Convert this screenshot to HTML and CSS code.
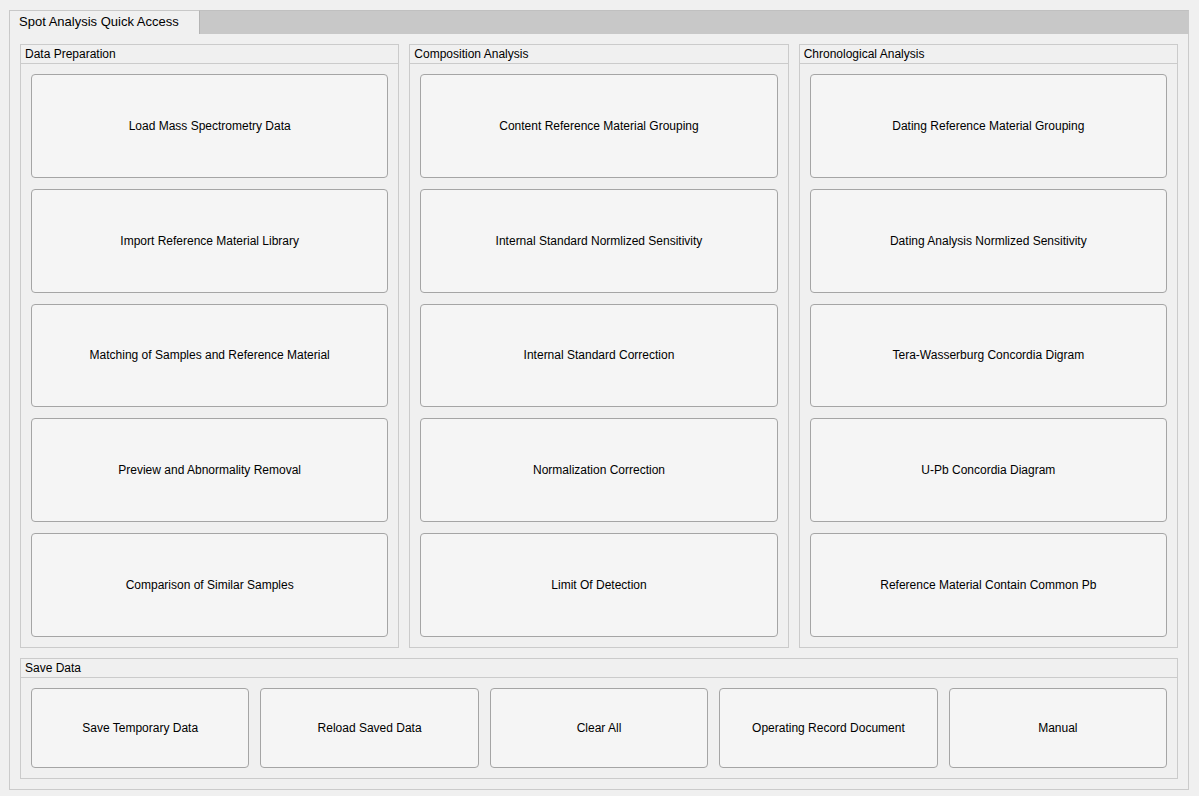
FILE: index.html
```html
<!DOCTYPE html>
<html>
<head>
<meta charset="utf-8">
<link rel="stylesheet" href="styles.css">
</head>
<body>
<div class="tabgroup">
  <div class="tabbar">
    <div class="tab">Spot Analysis Quick Access</div>
    <div class="tabfill"></div>
  </div>
  <div class="tabcontent">
    <div class="columns">
      <section class="panel">
        <div class="panel-title">Data Preparation</div>
        <div class="panel-body vertical">
          <button class="btn">Load Mass Spectrometry Data</button>
          <button class="btn">Import Reference Material Library</button>
          <button class="btn">Matching of Samples and Reference Material</button>
          <button class="btn">Preview and Abnormality Removal</button>
          <button class="btn">Comparison of Similar Samples</button>
        </div>
      </section>
      <section class="panel">
        <div class="panel-title">Composition Analysis</div>
        <div class="panel-body vertical">
          <button class="btn">Content Reference Material Grouping</button>
          <button class="btn">Internal Standard Normlized Sensitivity</button>
          <button class="btn">Internal Standard Correction</button>
          <button class="btn">Normalization Correction</button>
          <button class="btn">Limit Of Detection</button>
        </div>
      </section>
      <section class="panel">
        <div class="panel-title">Chronological Analysis</div>
        <div class="panel-body vertical">
          <button class="btn">Dating Reference Material Grouping</button>
          <button class="btn">Dating Analysis Normlized Sensitivity</button>
          <button class="btn">Tera-Wasserburg Concordia Digram</button>
          <button class="btn">U-Pb Concordia Diagram</button>
          <button class="btn">Reference Material Contain Common Pb</button>
        </div>
      </section>
    </div>
    <section class="panel save">
      <div class="panel-title">Save Data</div>
      <div class="panel-body horizontal">
        <button class="btn">Save Temporary Data</button>
        <button class="btn">Reload Saved Data</button>
        <button class="btn">Clear All</button>
        <button class="btn">Operating Record Document</button>
        <button class="btn">Manual</button>
      </div>
    </section>
  </div>
</div>
</body>
</html>
```
FILE: styles.css
```css
html, body {
  margin: 0;
  padding: 0;
  background: #f0f0f0;
  font-family: "Liberation Sans", Arial, sans-serif;
  color: #000;
}

.tabgroup {
  margin: 10px 0 0 9px;
  width: 1180px;
  height: 780px;
  display: flex;
  flex-direction: column;
}

.tabbar {
  display: flex;
  height: 24px;
  flex: none;
}

.tab {
  width: 191px;
  box-sizing: border-box;
  border-top: 1px solid #c8c8c8;
  border-left: 1px solid #c8c8c8;
  border-right: 1px solid #b4b4b4;
  background: #f0f0f0;
  font-size: 13px;
  line-height: 22px;
  padding-left: 9px;
  white-space: nowrap;
}

.tabfill {
  flex: 1;
  background: #c8c8c8;
  border-top: 1px solid #c0c0c0;
  border-right: 1px solid #c8c8c8;
}

.tabcontent {
  flex: 1;
  box-sizing: border-box;
  border: 1px solid #cbcbcb;
  border-top: none;
  padding: 10px;
  display: flex;
  flex-direction: column;
  gap: 10px;
}

.columns {
  flex: 1;
  display: grid;
  grid-template-columns: 1fr 1fr 1fr;
  gap: 10px;
}

.panel {
  border: 1px solid #cbcbcb;
  display: flex;
  flex-direction: column;
  min-height: 0;
}

.panel.save {
  flex: none;
  height: 121px;
  box-sizing: border-box;
}

.panel-title {
  height: 18px;
  line-height: 19px;
  font-size: 12px;
  padding-left: 4px;
  border-bottom: 1px solid #cbcbcb;
  flex: none;
}

.panel-body {
  flex: 1;
  padding: 10px;
  display: flex;
  gap: 11px;
  min-height: 0;
}

.panel-body.vertical {
  flex-direction: column;
}

.panel-body.horizontal {
  flex-direction: row;
}

.btn {
  flex: 1;
  min-width: 0;
  min-height: 0;
  margin: 0;
  border: 1px solid #a5a5a5;
  border-radius: 4px;
  background: #f5f5f5;
  font-family: "Liberation Sans", Arial, sans-serif;
  font-size: 12px;
  color: #000;
  padding: 0;
}
```
